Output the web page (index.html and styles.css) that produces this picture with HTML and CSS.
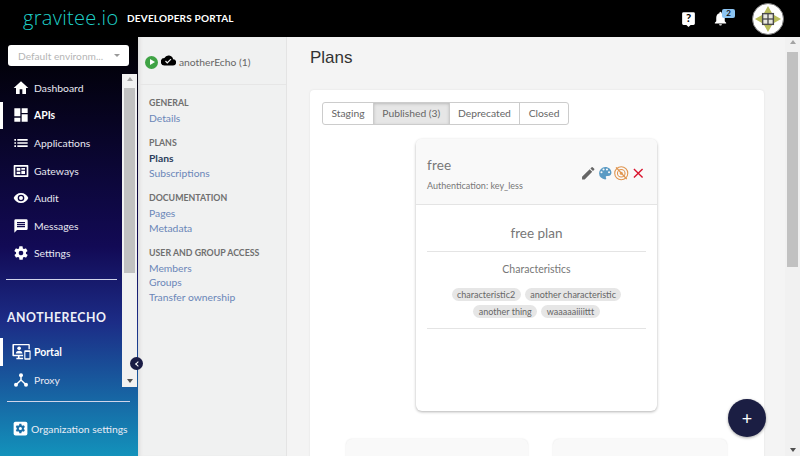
FILE: index.html
```html
<!DOCTYPE html>
<html lang="en">
<head>
    <meta charset="utf-8">
    <title>Gravitee.io Developers Portal</title>
    <link rel="stylesheet" href="styles.css">
</head>
<body>
    <header class="topbar">
        <span class="logo">gravitee.io</span>
        <span class="portal-title">DEVELOPERS PORTAL</span>
        <div class="top-actions">
            <svg class="top-icon" viewBox="0 0 24 24"><path d="M5 3h14a2 2 0 0 1 2 2v14a2 2 0 0 1-2 2h-4l-3 3-3-3H5a2 2 0 0 1-2-2V5a2 2 0 0 1 2-2z" fill="#fff"/><text x="12" y="17.500" class="help-mark">?</text></svg>
            <div class="bell">
                <svg class="top-icon" viewBox="0 0 24 24"><path fill="#fff" d="M12 22a2 2 0 0 0 2-2h-4a2 2 0 0 0 2 2zm6-6v-5c0-3.100-1.600-5.600-4.500-6.300V4a1.500 1.500 0 0 0-3 0v.7C7.600 5.400 6 7.900 6 11v5l-2 2v1h16v-1z"/></svg>
                <span class="bell-count">2</span>
            </div>
            <div class="avatar">
                <svg viewBox="0 0 30 30" class="avatar-img">
                    <polygon points="15,1 20,10 29,15 20,20 15,29 10,20 1,15 10,10" fill="#b9bd5c"/>
                    <rect x="8.500" y="8.500" width="13" height="13" fill="#4a4a4a"/>
                    <rect x="10" y="10" width="4.300" height="4.300" fill="#e8e8e0"/>
                    <rect x="15.700" y="10" width="4.300" height="4.300" fill="#e8e8e0"/>
                    <rect x="10" y="15.700" width="4.300" height="4.300" fill="#e8e8e0"/>
                    <rect x="15.700" y="15.700" width="4.300" height="4.300" fill="#e8e8e0"/>
                </svg>
            </div>
        </div>
    </header>

    <div class="layout">
        <aside class="sidebar">
            <div class="env-select">
                <span>Default environm...</span>
                <i class="caret"></i>
            </div>
            <div class="side-scroll">
                <nav class="side-nav">
                    <a class="side-link"><svg viewBox="0 0 24 24"><path d="M10 21v-7h4v7h5.500v-9H23L12 2 1 12h3.500v9z"/></svg>Dashboard</a>
                    <a class="side-link active"><svg viewBox="0 0 24 24"><path d="M2 2h9v12H2zM13 2h9v7h-9zM13 11h9v11h-9zM2 16h9v6H2z"/></svg>APIs</a>
                    <a class="side-link"><svg viewBox="0 0 24 24"><path d="M2 6h2.500v2.500H2zM6.500 6H22v2.500H6.500zM2 10.800h2.500v2.500H2zM6.500 10.800H22v2.500H6.500zM2 15.500h2.500V18H2zM6.500 15.500H22V18H6.500z"/></svg>Applications</a>
                    <a class="side-link"><svg viewBox="0 0 24 24"><path fill-rule="evenodd" d="M2 3h20a1 1 0 0 1 1 1v16a1 1 0 0 1-1 1H2a1 1 0 0 1-1-1V4a1 1 0 0 1 1-1zm1.500 2.500v13h17v-13zm2 2h5.500v4H5.500zm7 0H18v2.500h-5.500zm0 4H18v5h-5.500zm-7 1.500H11v3.500H5.500z"/></svg>Gateways</a>
                    <a class="side-link"><svg viewBox="0 0 24 24"><path fill-rule="evenodd" d="M12 4.500C7 4.500 2.700 7.600 1 12c1.700 4.400 6 7.500 11 7.500s9.300-3.100 11-7.500c-1.700-4.400-6-7.500-11-7.500zM12 17a5 5 0 1 1 0-10 5 5 0 0 1 0 10zm0-8a3 3 0 1 0 0 6 3 3 0 0 0 0-6z"/></svg>Audit</a>
                    <a class="side-link"><svg viewBox="0 0 24 24"><path fill-rule="evenodd" d="M4 2h16a2 2 0 0 1 2 2v12a2 2 0 0 1-2 2H6l-4 4V4a2 2 0 0 1 2-2zm2 7v2h12V9zm0 3v2h12v-2zM6 6v2h12V6z"/></svg>Messages</a>
                    <a class="side-link"><svg viewBox="0 0 24 24"><path fill-rule="evenodd" d="M19.400 13a7.500 7.500 0 0 0 0-2l2.100-1.600a.5.5 0 0 0 .1-.6l-2-3.500a.5.5 0 0 0-.6-.2l-2.500 1a7.300 7.300 0 0 0-1.700-1l-.4-2.700a.5.500 0 0 0-.5-.4h-4a.5.5 0 0 0-.5.4l-.4 2.700a7.300 7.300 0 0 0-1.700 1l-2.500-1a.5.5 0 0 0-.6.2l-2 3.500a.5.5 0 0 0 .1.6L4.600 11a7.500 7.500 0 0 0 0 2l-2.100 1.600a.5.5 0 0 0-.1.6l2 3.500c.1.200.4.300.6.200l2.500-1c.5.400 1.100.700 1.700 1l.4 2.700c0 .2.200.4.500.4h4c.3 0 .5-.2.500-.4l.4-2.700c.6-.3 1.200-.6 1.700-1l2.500 1c.2.100.5 0 .6-.2l2-3.500a.5.500 0 0 0-.1-.6zM12 15.500a3.500 3.500 0 1 1 0-7 3.500 3.500 0 0 1 0 7z"/></svg>Settings</a>
                </nav>
                <hr class="side-rule">
                <div class="side-section">ANOTHERECHO</div>
                <nav class="side-nav">
                    <a class="side-link active"><svg class="portal-icon" viewBox="0 0 24 24"><path fill-rule="evenodd" d="M1.500 2.500h20a1 1 0 0 1 1 1V9h-1.700V4.200H2.500v12H14V18H9.500v2H14v1.700H5.500V20h2v-2H1.500a1 1 0 0 1-1-1V3.500a1 1 0 0 1 1-1z"/><circle cx="9" cy="8" r="2.300"/><path d="M4.800 14.500c0-2.400 2.600-3.300 4.200-3.300s4.200.9 4.200 3.300z"/><path fill-rule="evenodd" d="M16.500 10.500h6a1 1 0 0 1 1 1v10a1 1 0 0 1-1 1h-6a1 1 0 0 1-1-1v-10a1 1 0 0 1 1-1zm.4 2v8h5.200v-8z"/></svg>Portal</a>
                    <a class="side-link"><svg viewBox="0 0 24 24"><circle cx="12" cy="5" r="3"/><circle cx="4.500" cy="19" r="3"/><circle cx="19.500" cy="19" r="3"/><path d="M12 5v8M12 12L4.500 19M12 12l7.500 7" fill="none" stroke="#fff" stroke-width="2.200"/></svg>Proxy</a>
                </nav>
                <div class="scroll-track">
                    <i class="arrow-up"></i>
                    <div class="scroll-thumb"></div>
                    <i class="arrow-down"></i>
                </div>
            </div>
            <hr class="side-rule org-rule">
            <a class="org-link">
                <svg viewBox="0 0 24 24"><rect x="1" y="1" width="22" height="22" rx="3" fill="#fff"/><path fill="#1a6ea6" fill-rule="evenodd" d="M17.400 13a5.500 5.500 0 0 0 0-2l1.700-1.300-1.700-2.900-2 .8a5.500 5.500 0 0 0-1.700-1L13.400 4.500h-3.300l-.3 2.100a5.500 5.500 0 0 0-1.700 1l-2-.8-1.700 2.900L6.100 11a5.500 5.500 0 0 0 0 2l-1.700 1.300 1.700 2.900 2-.8c.5.400 1.100.800 1.700 1l.3 2.100h3.300l.3-2.100c.6-.2 1.200-.6 1.700-1l2 .8 1.700-2.900zM11.800 14.500a2.500 2.500 0 1 1 0-5 2.500 2.500 0 0 1 0 5z"/></svg>
                Organization settings
            </a>
            <button class="collapse-btn"><i></i></button>
        </aside>

        <nav class="subnav">
            <div class="subnav-head">
                <span class="play-dot"><i></i></span>
                <svg class="cloud" viewBox="0 0 24 24"><path fill-rule="evenodd" d="M19.400 10A7.500 7.500 0 0 0 5.400 8 6 6 0 0 0 6 20h13a5 5 0 0 0 .4-10zM10 17l-3.500-3.500 1.400-1.400 2.100 2.100 5.200-5.200 1.400 1.400z"/></svg>
                <span class="api-name">anotherEcho (1)</span>
            </div>
            <div class="subnav-group">
                <h4>GENERAL</h4>
                <a>Details</a>
            </div>
            <div class="subnav-group">
                <h4>PLANS</h4>
                <a class="current">Plans</a>
                <a>Subscriptions</a>
            </div>
            <div class="subnav-group">
                <h4>DOCUMENTATION</h4>
                <a>Pages</a>
                <a>Metadata</a>
            </div>
            <div class="subnav-group">
                <h4>USER AND GROUP ACCESS</h4>
                <a>Members</a>
                <a>Groups</a>
                <a>Transfer ownership</a>
            </div>
        </nav>

        <main class="content">
            <h1>Plans</h1>
            <section class="panel">
                <div class="tabs">
                    <span class="tab">Staging</span>
                    <span class="tab selected">Published (3)</span>
                    <span class="tab">Deprecated</span>
                    <span class="tab">Closed</span>
                </div>
                <article class="plan-card">
                    <div class="plan-head">
                        <div class="plan-title">
                            <div class="plan-name">free</div>
                            <div class="plan-auth">Authentication: key_less</div>
                        </div>
                        <div class="plan-actions">
                            <svg viewBox="0 0 24 24"><path fill="#666" d="M3 17.250V21h3.750L17.800 9.940l-3.750-3.750zM20.700 7.040a1 1 0 0 0 0-1.410l-2.340-2.340a1 1 0 0 0-1.410 0l-1.830 1.830 3.750 3.750z"/></svg>
                            <svg viewBox="0 0 24 24"><path fill="#5b9bc4" fill-rule="evenodd" d="M12 3a9 9 0 0 0 0 18 1.500 1.500 0 0 0 1.100-2.500 1.500 1.500 0 0 1 1.100-2.500H16a5 5 0 0 0 5-5c0-4.400-4-8-9-8zM6.500 12a1.500 1.500 0 1 1 0-3 1.500 1.500 0 0 1 0 3zm3-4a1.500 1.500 0 1 1 0-3 1.500 1.500 0 0 1 0 3zm5 0a1.500 1.500 0 1 1 0-3 1.500 1.500 0 0 1 0 3zm3 4a1.500 1.500 0 1 1 0-3 1.500 1.500 0 0 1 0 3z"/></svg>
                            <svg viewBox="0 0 24 24" fill="none" stroke="#e0954f" stroke-width="1.600"><circle cx="12" cy="12" r="9.500"/><circle cx="12" cy="12" r="5.500"/><circle cx="12" cy="12" r="1.500"/><path d="M4.500 3.500l15.500 17" stroke-width="2"/></svg>
                            <svg viewBox="0 0 24 24"><path fill="#d9132d" d="M19 6.410L17.590 5 12 10.590 6.410 5 5 6.410 10.590 12 5 17.590 6.410 19 12 13.410 17.590 19 19 17.590 13.410 12z"/></svg>
                        </div>
                    </div>
                    <div class="plan-body">
                        <div class="plan-desc">free plan</div>
                        <div class="plan-chars">
                            <div class="chars-title">Characteristics</div>
                            <div class="chips">
                                <span class="chip">characteristic2</span>
                                <span class="chip">another characteristic</span>
                                <span class="chip">another thing</span>
                                <span class="chip">waaaaaiiiittt</span>
                            </div>
                        </div>
                    </div>
                </article>
                <div class="plan-row">
                    <div class="plan-stub"></div>
                    <div class="plan-stub"></div>
                </div>
            </section>
            <button class="fab">+</button>
        </main>

        <div class="page-scroll">
            <i class="arrow-up"></i>
            <div class="scroll-thumb"></div>
            <i class="arrow-down"></i>
        </div>
    </div>
</body>
</html>
```
FILE: styles.css
```css
* {
    box-sizing: border-box;
}
html, body {
    height: 100%;
    margin: 0;
    overflow: hidden;
}
body {
    display: flex;
    flex-direction: column;
    font-family: "Lato", "Liberation Sans", sans-serif;
    background: #fff;
}
.topbar {
    height: 37px;
    flex: none;
    background: #000;
    display: flex;
    align-items: center;
    padding-left: 23px;
}
.logo {
    color: #1fd0c8;
    font-family: "Open Sans", sans-serif;
    font-size: 20px;
    font-weight: 300;
    letter-spacing: 0.3px;
    width: 104px;
    position: relative;
    top: -1px;
}
.portal-title {
    color: #fff;
    font-size: 10px;
    font-weight: 700;
    letter-spacing: 0.2px;
    position: relative;
    top: -1px;
}
.top-actions {
    margin-left: auto;
    display: flex;
    align-items: center;
    padding-right: 16px;
}
.top-icon {
    width: 17px;
    height: 17px;
    display: block;
}
.help-mark {
    font-size: 16px;
    font-weight: 700;
    fill: #000;
    text-anchor: middle;
}
.bell {
    position: relative;
    margin-left: 15px;
    margin-right: 23px;
}
.bell-count {
    position: absolute;
    top: -1px;
    left: 10px;
    width: 13px;
    height: 9px;
    background: #8cc4f2;
    border-radius: 2px;
    color: #111;
    font-size: 8px;
    font-weight: 700;
    line-height: 9px;
    text-align: center;
}
.avatar {
    width: 32px;
    height: 32px;
    border-radius: 50%;
    border: 1.500px solid #777;
    background: #fff;
    padding: 1px;
    overflow: hidden;
}
.avatar-img {
    display: block;
    width: 100%;
    height: 100%;
}
.layout {
    flex: 1;
    display: flex;
    min-height: 0;
}
.sidebar {
    width: 138px;
    flex: none;
    position: relative;
    display: flex;
    flex-direction: column;
    background: linear-gradient(#000 0%, #120a55 50%, #1c2c86 68%, #1392bb 100%);
    color: #fff;
}
.env-select {
    width: 121px;
    height: 21px;
    margin: 8px 0 8px 8px;
    flex: none;
    background: #fff;
    border-radius: 3px;
    color: #b5b5b5;
    font-size: 10.200px;
    display: flex;
    align-items: center;
    justify-content: space-between;
    padding: 0 9px 0 10px;
}
.caret {
    border: 3px solid transparent;
    border-top: 3px solid #999;
    border-bottom: 0;
}
.side-scroll {
    height: 313px;
    flex: none;
    position: relative;
    padding-right: 15px;
    overflow: hidden;
}
.side-nav {
    display: flex;
    flex-direction: column;
}
.side-link {
    height: 27.600px;
    display: flex;
    align-items: center;
    gap: 5px;
    padding-left: 13px;
    font-size: 10.400px;
    color: #e8e8f2;
}
.side-link svg {
    width: 16px;
    height: 16px;
    fill: #fff;
    flex: none;
}
.side-link .portal-icon {
    width: 19px;
    height: 19px;
    margin-left: -1px;
    margin-right: -2px;
}
.side-link.active {
    font-weight: 700;
    color: #fff;
    box-shadow: inset 3px 0 0 #fff;
}
.side-rule {
    border: 0;
    border-top: 1px solid #d0d4ea;
    margin: 12.300px 6px 0 6px;
}
.side-section {
    font-size: 12.300px;
    font-weight: 700;
    letter-spacing: 0.5px;
    color: #eef0f8;
    margin: 30px 0 12.700px 7px;
}
.scroll-track, .page-scroll {
    background: #f1f1f1;
    display: flex;
    flex-direction: column;
    align-items: center;
}
.scroll-track {
    position: absolute;
    top: 0;
    bottom: 0;
    width: 15px;
    right: 1px;
}
.scroll-thumb {
    background: #c1c1c1;
    width: 11px;
}
.scroll-track .scroll-thumb {
    height: 185px;
    margin-top: 14px;
}
.arrow-up, .arrow-down {
    position: absolute;
    left: 50%;
    margin-left: -3px;
    border: 3px solid transparent;
}
.arrow-up {
    top: 3px;
    border-bottom: 4px solid #a3a3a3;
    border-top: 0;
}
.arrow-down {
    bottom: 4px;
    border-top: 4px solid #505050;
    border-bottom: 0;
}
.org-rule {
    margin: 14px 8px 0 7px;
}
.org-link {
    display: flex;
    align-items: center;
    gap: 3px;
    padding-left: 13px;
    margin-top: 19px;
    font-size: 10.400px;
    color: #e8ecf5;
}
.org-link svg {
    width: 15px;
    height: 15px;
    flex: none;
}
.collapse-btn {
    position: absolute;
    right: -5px;
    top: 320px;
    width: 13px;
    height: 13px;
    border: 0;
    padding: 0;
    border-radius: 50%;
    background: #1a1c45;
    display: flex;
    align-items: center;
    justify-content: center;
}
.collapse-btn i {
    width: 4px;
    height: 4px;
    border-left: 1.500px solid #fff;
    border-bottom: 1.500px solid #fff;
    transform: rotate(45deg);
    margin-left: 2px;
}
.subnav {
    width: 149px;
    flex: none;
    background: #f0f1f1;
    border-right: 1px solid #e4e4e4;
    box-shadow: inset 4px 0 4px -3px #d4d4d4;
}
.subnav-head {
    height: 48px;
    display: flex;
    align-items: center;
    padding: 3px 0 0 7px;
    border-bottom: 1px solid #e6e6e6;
    margin-bottom: 11px;
    font-size: 10.300px;
    color: #666;
}
.play-dot {
    width: 13px;
    height: 13px;
    border-radius: 50%;
    background: #3fa345;
    display: flex;
    align-items: center;
    justify-content: center;
    margin-right: 3px;
}
.play-dot i {
    border-left: 5px solid #fff;
    border-top: 3px solid transparent;
    border-bottom: 3px solid transparent;
    margin-left: 1px;
}
.cloud {
    width: 15px;
    height: 15px;
    margin-right: 3px;
    position: relative;
    top: -2px;
}
.subnav-group {
    padding-left: 11px;
    margin-bottom: 10.800px;
    display: flex;
    flex-direction: column;
    align-items: flex-start;
    font-size: 10.300px;
    line-height: 14.500px;
    color: #6a86b8;
}
.subnav-group h4 {
    margin: 0 0 1px;
    font-size: 8.800px;
    font-weight: 700;
    color: #6f6f6f;
    line-height: 14px;
}
.subnav-group .current {
    font-weight: 700;
    color: #2c3e5c;
}
.content {
    flex: 1;
    min-width: 0;
    position: relative;
    background: #f4f4f4;
    padding: 0 21px 0 23px;
    overflow: hidden;
}
.content h1 {
    margin: 10px 0 21px;
    font-family: "Liberation Sans", sans-serif;
    font-size: 17px;
    line-height: 22px;
    font-weight: 400;
    color: #333;
}
.panel {
    background: #fff;
    border-radius: 4px;
    box-shadow: 0 0 2px #ddd;
    padding: 11px 12px 0;
    height: 400px;
}
.tabs {
    display: inline-flex;
    border: 1px solid #ccc;
    border-radius: 3px;
    font-size: 10.300px;
    color: #666;
    height: 23px;
    align-items: stretch;
}
.tab {
    display: flex;
    align-items: center;
    padding: 0 8.400px;
    border-right: 1px solid #ccc;
}
.tab:last-child {
    border-right: 0;
}
.tab.selected {
    background: #e6e6e6;
    box-shadow: inset 0 1px 3px #bbb;
}
.plan-card {
    width: 241px;
    height: 272px;
    margin: 14px 0 0 94px;
    background: #fff;
    border-radius: 6px;
    box-shadow: 0 1px 3px rgba(0, 0, 0, 0.3);
    overflow: hidden;
}
.plan-head {
    height: 66px;
    background: #f9f9f9;
    border-bottom: 1px solid #e4e4e4;
    display: flex;
    justify-content: space-between;
    align-items: center;
    padding: 0 11px;
}
.plan-title {
    padding-top: 6px;
}
.plan-name {
    font-size: 13.500px;
    color: #777;
    letter-spacing: 0.2px;
    margin-bottom: 7px;
}
.plan-auth {
    font-size: 9px;
    color: #777;
}
.plan-actions {
    display: flex;
    margin-top: 4px;
}
.plan-actions svg {
    width: 16.500px;
    height: 16.500px;
}
.plan-body {
    padding: 20px 11px 0;
    text-align: center;
}
.plan-desc {
    font-size: 13.500px;
    color: #777;
    padding-bottom: 10px;
    border-bottom: 1px solid #e4e4e4;
}
.plan-chars {
    padding: 11px 0 10px;
    border-bottom: 1px solid #e4e4e4;
}
.chars-title {
    font-size: 10.500px;
    color: #777;
    margin-bottom: 13px;
}
.chips {
    display: flex;
    flex-wrap: wrap;
    justify-content: center;
    gap: 4px;
}
.chip {
    background: #e6e6e6;
    border-radius: 7px;
    height: 13px;
    padding: 0 5.500px;
    line-height: 13px;
    font-size: 9px;
    color: #666;
}
.plan-row {
    display: grid;
    grid-template-columns: 182px 174px;
    gap: 25px;
    margin: 28px 0 0 24px;
}
.plan-stub {
    height: 60px;
    background: #f9f9f9;
    border-radius: 6px;
    box-shadow: 0 0 2px #e2e2e2;
}
.fab {
    position: absolute;
    right: 19px;
    bottom: 19px;
    width: 38px;
    height: 38px;
    border: 0;
    border-radius: 50%;
    background: #1b1e43;
    color: #fff;
    font-family: "Lato", sans-serif;
    font-size: 18px;
    line-height: 38px;
    padding: 0;
    box-shadow: 0 1px 3px rgba(0, 0, 0, 0.35);
}
.page-scroll {
    width: 15px;
    flex: none;
    position: relative;
}
.page-scroll .scroll-thumb {
    height: 215px;
    margin-top: 15px;
}
```
